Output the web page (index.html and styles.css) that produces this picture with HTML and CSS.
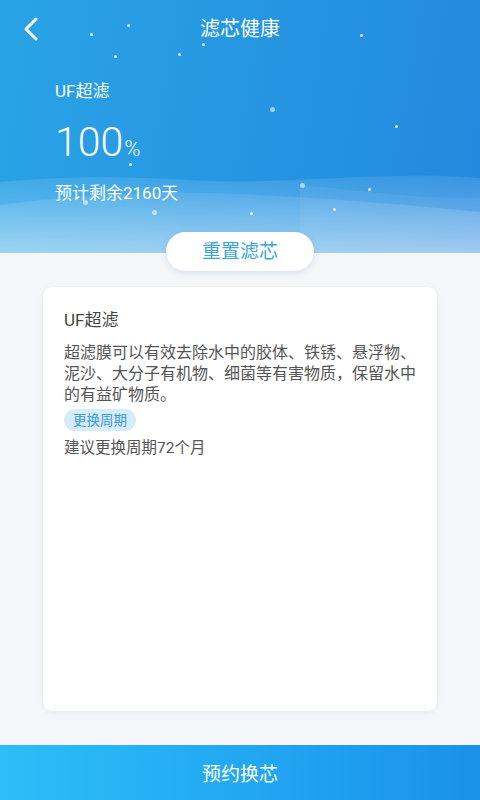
FILE: index.html
```html
<!DOCTYPE html>
<html lang="zh">
<head>
<meta charset="utf-8">
<link rel="stylesheet" href="styles.css">
</head>
<body>
<div class="page">
  <header class="header">
    <svg class="waves" width="480" height="253" viewBox="0 0 480 253" preserveAspectRatio="none">
      <defs>
        <linearGradient id="w1" x1="0" y1="0" x2="0" y2="1">
          <stop offset="0" stop-color="#ffffff" stop-opacity="0.10"/>
          <stop offset="1" stop-color="#ffffff" stop-opacity="0.35"/>
        </linearGradient>
        <linearGradient id="w2" x1="0" y1="0" x2="0" y2="1">
          <stop offset="0" stop-color="#ffffff" stop-opacity="0.08"/>
          <stop offset="1" stop-color="#ffffff" stop-opacity="0.30"/>
        </linearGradient>
      </defs>
      <path d="M0 182 C 60 176, 120 176, 190 180 C 280 186, 380 170, 480 178 L480 253 L0 253 Z" fill="url(#w1)"/>
      <path d="M0 205 C 70 196, 150 190, 240 194 C 330 198, 410 205, 480 212 L480 253 L0 253 Z" fill="url(#w2)"/>
      <path d="M300 185 C 360 190, 420 200, 480 198 L480 253 L300 253 Z" fill="#ffffff" fill-opacity="0.06"/>
    </svg>
    <div class="stars">
      <i class="star" style="left:127px;top:24px"></i>
      <i class="star" style="left:90px;top:33px"></i>
      <i class="star" style="left:114px;top:55px"></i>
      <i class="star" style="left:178px;top:53px"></i>
      <i class="star" style="left:202px;top:43px"></i>
      <i class="star" style="left:360px;top:34px"></i>
      <i class="star big" style="left:270px;top:107px"></i>
      <i class="star" style="left:395px;top:125px"></i>
      <i class="star" style="left:129px;top:163px"></i>
      <i class="star big" style="left:300px;top:183px"></i>
      <i class="star" style="left:368px;top:188px"></i>
      <i class="star big" style="left:83px;top:200px"></i>
      <i class="star big" style="left:152px;top:210px"></i>
      <i class="star" style="left:250px;top:212px"></i>
      <i class="star" style="left:333px;top:208px"></i>
    </div>
    <nav class="nav">
      <svg class="back" width="20" height="26" viewBox="0 0 20 26">
        <path d="M15 3 L5 13 L15 23" fill="none" stroke="#ffffff" stroke-width="3" stroke-linecap="round" stroke-linejoin="round"/>
      </svg>
      <h1 class="title">滤芯健康</h1>
    </nav>
    <div class="info">
      <div class="name">UF超滤</div>
      <div class="percent"><span class="num">100</span><span class="unit">%</span></div>
      <div class="remain">预计剩余2160天</div>
    </div>
  </header>
  <button class="reset">重置滤芯</button>
  <section class="card">
    <div class="card-title">UF超滤</div>
    <p class="desc">超滤膜可以有效去除水中的胶体、铁锈、悬浮物、泥沙、大分子有机物、细菌等有害物质，保留水中的有益矿物质。</p>
    <span class="tag">更换周期</span>
    <div class="cycle">建议更换周期72个月</div>
  </section>
  <footer class="footer">预约换芯</footer>
</div>
</body>
</html>
```
FILE: styles.css
```css
* { box-sizing: border-box; }
html, body {
  margin: 0;
  padding: 0;
}
body {
  width: 480px;
  height: 800px;
  overflow: hidden;
  background: #f4f6f9;
  font-family: Roboto, "Noto Sans CJK SC", sans-serif;
}
.page {
  height: 800px;
  display: flex;
  flex-direction: column;
}
.header {
  position: relative;
  height: 253px;
  flex: none;
  background: linear-gradient(100deg, #2aa3e6 0%, #2595e2 55%, #2388de 100%);
  color: #fff;
  overflow: hidden;
}
.waves {
  position: absolute;
  left: 0;
  top: 0;
}
.stars {
  position: absolute;
  inset: 0;
}
.star {
  position: absolute;
  width: 3px;
  height: 3px;
  border-radius: 50%;
  background: rgba(255, 255, 255, 0.85);
}
.star.big {
  width: 5px;
  height: 5px;
  background: rgba(255, 255, 255, 0.55);
}
.nav {
  position: relative;
  height: 58px;
  display: flex;
  align-items: center;
  justify-content: center;
}
.back {
  position: absolute;
  left: 21px;
  top: 16px;
}
.title {
  margin: 0;
  font-size: 20px;
  font-weight: 400;
  line-height: 24px;
  margin-top: -1px;
}
.info {
  position: relative;
  padding-left: 55px;
}
.name {
  margin-top: 21px;
  font-size: 17px;
  line-height: 24px;
}
.percent {
  margin-top: 15px;
  line-height: 48px;
  height: 48px;
}
.num {
  font-size: 41px;
  font-weight: 300;
}
.unit {
  font-size: 22px;
  font-weight: 300;
  margin-left: 1px;
}
.remain {
  margin-top: 15px;
  font-size: 17px;
  line-height: 24px;
}
.reset {
  align-self: center;
  margin-top: -21px;
  width: 148px;
  height: 39px;
  border: none;
  border-radius: 20px;
  background: #ffffff;
  color: #3aa6da;
  font-family: inherit;
  font-size: 19px;
  line-height: 24px;
  padding: 0;
  box-shadow: 0 2px 6px rgba(60, 120, 180, 0.15);
  position: relative;
}
.card {
  margin: 16px 43px 0 43px;
  height: 424px;
  flex: none;
  background: #ffffff;
  border-radius: 9px;
  box-shadow: 0 1px 5px rgba(0, 0, 0, 0.07);
  padding: 21px 21px 0 21px;
  display: flex;
  flex-direction: column;
  align-items: flex-start;
}
.card-title {
  font-size: 17px;
  line-height: 24px;
  color: #444;
}
.desc {
  margin: 9.5px 0 0 0;
  font-size: 16px;
  line-height: 21px;
  color: #555;
  width: 352px;
}
.tag {
  margin-top: 4px;
  height: 22px;
  line-height: 22px;
  padding: 0 9px;
  border-radius: 11px;
  background: #d5ecfa;
  color: #3b9ad8;
  font-size: 13.5px;
}
.cycle {
  margin-top: 7.5px;
  font-size: 15.5px;
  line-height: 21px;
  color: #555;
}
.footer {
  margin-top: auto;
  height: 55px;
  flex: none;
  background: linear-gradient(90deg, #2dbef9 0%, #22a8f2 50%, #1a91ea 100%);
  color: #fff;
  font-size: 19px;
  display: flex;
  align-items: center;
  justify-content: center;
}
```
